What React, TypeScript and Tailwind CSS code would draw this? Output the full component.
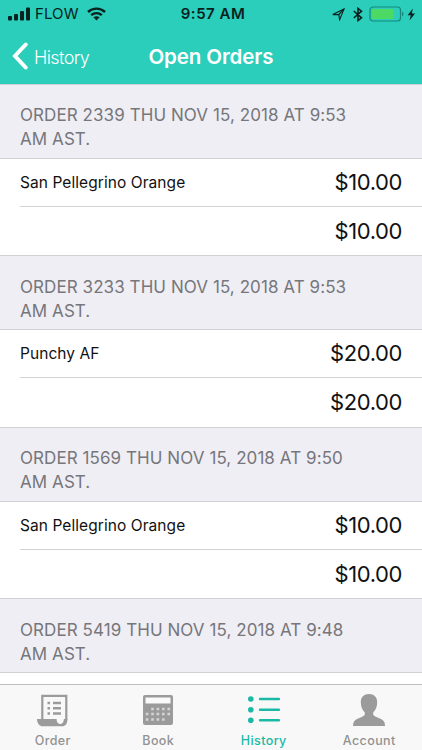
interface Order {
    id: string
    time: string
    item?: string
    price?: string
}

const orders: Order[] = [
    { id: '2339', time: '9:53', item: 'San Pellegrino Orange', price: '$10.00' },
    { id: '3233', time: '9:53', item: 'Punchy AF', price: '$20.00' },
    { id: '1569', time: '9:50', item: 'San Pellegrino Orange', price: '$10.00' },
    { id: '5419', time: '9:48' },
]

const StatusBar = () => {
    return (
        <div className="grid h-7 grid-cols-[1fr_auto_1fr] items-center pl-2 pr-1.5 text-[#08231f]">
            <div className="flex items-center">
                <svg width="23" height="14" viewBox="0 0 23 14" fill="currentColor">
                    <rect x="0" y="9" width="4" height="4.5" rx="1" />
                    <rect x="6" y="7" width="4" height="6.5" rx="1" />
                    <rect x="12" y="4" width="4" height="9.5" rx="1" />
                    <rect x="18" y="0.5" width="4" height="13" rx="1" />
                </svg>
                <span className="ml-1 text-[15px] leading-7 tracking-[0.1px]">FLOW</span>
                <svg className="ml-2" width="19" height="14" viewBox="0 0 19 14" fill="none" stroke="currentColor" strokeWidth="2.4">
                    <path d="M1 5C5.8 0.5 13.2 0.5 18 5" />
                    <path d="M4.2 8.2C7.2 5.4 11.8 5.4 14.8 8.2" />
                    <path d="M9.5 13.4L6.4 10.3C8.2 8.8 10.8 8.8 12.6 10.3Z" fill="currentColor" stroke="none" />
                </svg>
            </div>
            <span className="relative left-px text-[15px] font-semibold tracking-[0.5px]">9:57 AM</span>
            <div className="flex items-center justify-end">
                <svg width="13" height="13" viewBox="0 0 13 13" fill="none" stroke="currentColor" strokeWidth="1.1">
                    <path d="M0.8 6.6L12 1L7.6 11.8L6.8 6.5Z" />
                    <path d="M6.8 6.5L12 1" />
                </svg>
                <svg className="ml-2" width="10" height="15" viewBox="0 0 10 15" fill="none" stroke="currentColor" strokeWidth="1.6">
                    <path d="M0.8 4L8.5 10.8L5 13.6V1.4L8.5 4.2L0.8 11" />
                </svg>
                <svg className="ml-1.5" width="36" height="16" viewBox="0 0 36 16" fill="none">
                    <rect x="1" y="1" width="30.5" height="14" rx="3" stroke="#16877b" strokeWidth="1.2" />
                    <rect x="3" y="3" width="21.5" height="10" rx="1" fill="#4cd964" />
                    <path d="M33 5.5C35 6.5 35 9.5 33 10.5Z" fill="#16877b" />
                </svg>
                <svg className="ml-0.5" width="9" height="13" viewBox="0 0 9 13" fill="currentColor">
                    <path d="M5.8 0.5L0.6 7.2H3.8L2.5 12.5L8 5.4H4.8Z" />
                </svg>
            </div>
        </div>
    )
}

const OrderIcon = () => (
    <svg width="31" height="33" viewBox="0 0 31 33" fill="none">
        <path d="M5.3 25V1.8H29.3V26" stroke="#9b9b9b" strokeWidth="2.2" />
        <path d="M0 25H19.5C19.8 28.5 21 30 23.2 30C25.5 30 26.5 28.5 27 25H30.4C30.4 30 28.5 32.3 25 32.3H6C2.5 32.3 0 29.5 0 25Z" fill="#9b9b9b" />
        <path d="M10.5 9H13M16 9H24M10.5 14.3H13M16 14.3H24M10.5 19.5H13M16 19.5H24" stroke="#9b9b9b" strokeWidth="2.5" />
    </svg>
)

const BookIcon = () => (
    <svg width="30" height="30" viewBox="0 0 30 30">
        <rect width="30" height="30" rx="2" fill="#9b9b9b" />
        <rect x="2.5" y="2.5" width="25" height="6" fill="#fafafa" />
        <path d="M8.2 14H28M2.8 19H28M2.8 24.5H23" stroke="#d5d5d5" strokeWidth="2.6" strokeDasharray="2.6 2.8" />
    </svg>
)

const HistoryIcon = () => (
    <svg width="32" height="28" viewBox="0 0 32 28" fill="#19b9a5">
        <circle cx="2.8" cy="3" r="2.8" />
        <circle cx="2.8" cy="13.7" r="2.8" />
        <circle cx="2.8" cy="24.3" r="2.8" />
        <path d="M12 3H31M12 13.7H31M12 24.3H31" stroke="#19b9a5" strokeWidth="2.4" strokeLinecap="round" />
    </svg>
)

const AccountIcon = () => (
    <svg width="32" height="32" viewBox="0 0 32 32" fill="#9b9b9b">
        <path d="M16 0C21 0 24.2 3 24.2 8C24.2 13 22.5 16 20.3 18.2C19.8 20.2 20.5 21.8 22.3 22.5L28 25C31 26.3 32 28.5 32 32H0C0 28.5 1 26.3 4 25L9.7 22.5C11.5 21.8 12.2 20.2 11.7 18.2C9.5 16 7.8 13 7.8 8C7.8 3 11 0 16 0Z" />
    </svg>
)

const tabs = [
    { label: 'Order', icon: <OrderIcon />, active: false },
    { label: 'Book', icon: <BookIcon />, active: false },
    { label: 'History', icon: <HistoryIcon />, active: true },
    { label: 'Account', icon: <AccountIcon />, active: false },
]

const OrderSection: React.FC<{ order: Order }> = ({ order }) => {
    return (
        <section className="flex h-[171.5px] shrink-0 flex-col">
            <h2 className="h-[75px] shrink-0 border-y border-[#d2d2d5] bg-[#efeef4] pl-5 pt-[18.4px] text-[17px] leading-6 tracking-[0.07px] text-[#76767b]">
                ORDER {order.id} THU NOV 15, 2018 AT {order.time}<br />AM AST.
            </h2>
            {order.item ?
                <>
                    <div className="ml-5 flex h-12 shrink-0 items-center justify-between border-b border-[#d2d2d5] pr-5">
                        <span className="text-[15.5px] tracking-[0.07px]">{order.item}</span>
                        <span className="text-[22px] tracking-[-0.4px]">{order.price}</span>
                    </div>
                    <div className="flex flex-1 items-center justify-end pr-5">
                        <span className="text-[22px] tracking-[-0.4px]">{order.price}</span>
                    </div>
                </>
                : null}
        </section>
    )
}

const App = () => {
    return (
        <div className="flex h-[750px] w-[422px] flex-col overflow-hidden bg-white font-['Inter','Liberation_Sans',sans-serif] text-[#111111]">
            <header className="h-[83.8px] shrink-0 bg-[#2bcdbb]">
                <StatusBar />
                <div className="grid h-14 grid-cols-[1fr_auto_1fr] items-center pl-3 pr-3 text-white">
                    <div className="flex items-center gap-1.5">
                        <svg width="16" height="28" viewBox="0 0 16 28" fill="none" stroke="currentColor" strokeWidth="4" strokeLinecap="round" strokeLinejoin="miter">
                            <path d="M13.7 2.5L3 14L13.7 25.5" />
                        </svg>
                        <span className="pt-0.5 text-[18px] font-light tracking-[-0.6px]">History</span>
                    </div>
                    <h1 className="pt-0.5 text-[20.5px] font-semibold tracking-[-0.1px]">Open Orders</h1>
                </div>
            </header>
            <main className="flex min-h-0 flex-1 flex-col overflow-hidden">
                {orders.map((order) => <OrderSection key={order.id} order={order} />)}
            </main>
            <nav className="grid h-[66px] shrink-0 grid-cols-4 border-t border-[#bdbdbf] bg-[#f8f8f8]">
                {tabs.map((tab) => (
                    <div key={tab.label} className={tab.active ? 'flex flex-col items-center text-[#19b9a5]' : 'flex flex-col items-center text-[#929292]'}>
                        <div className="mt-2 flex h-[34px] items-center">{tab.icon}</div>
                        <span className="mt-1.5 text-[12.5px] font-medium leading-4 tracking-[0.4px]">{tab.label}</span>
                    </div>
                ))}
            </nav>
        </div>
    )
}

export default App
